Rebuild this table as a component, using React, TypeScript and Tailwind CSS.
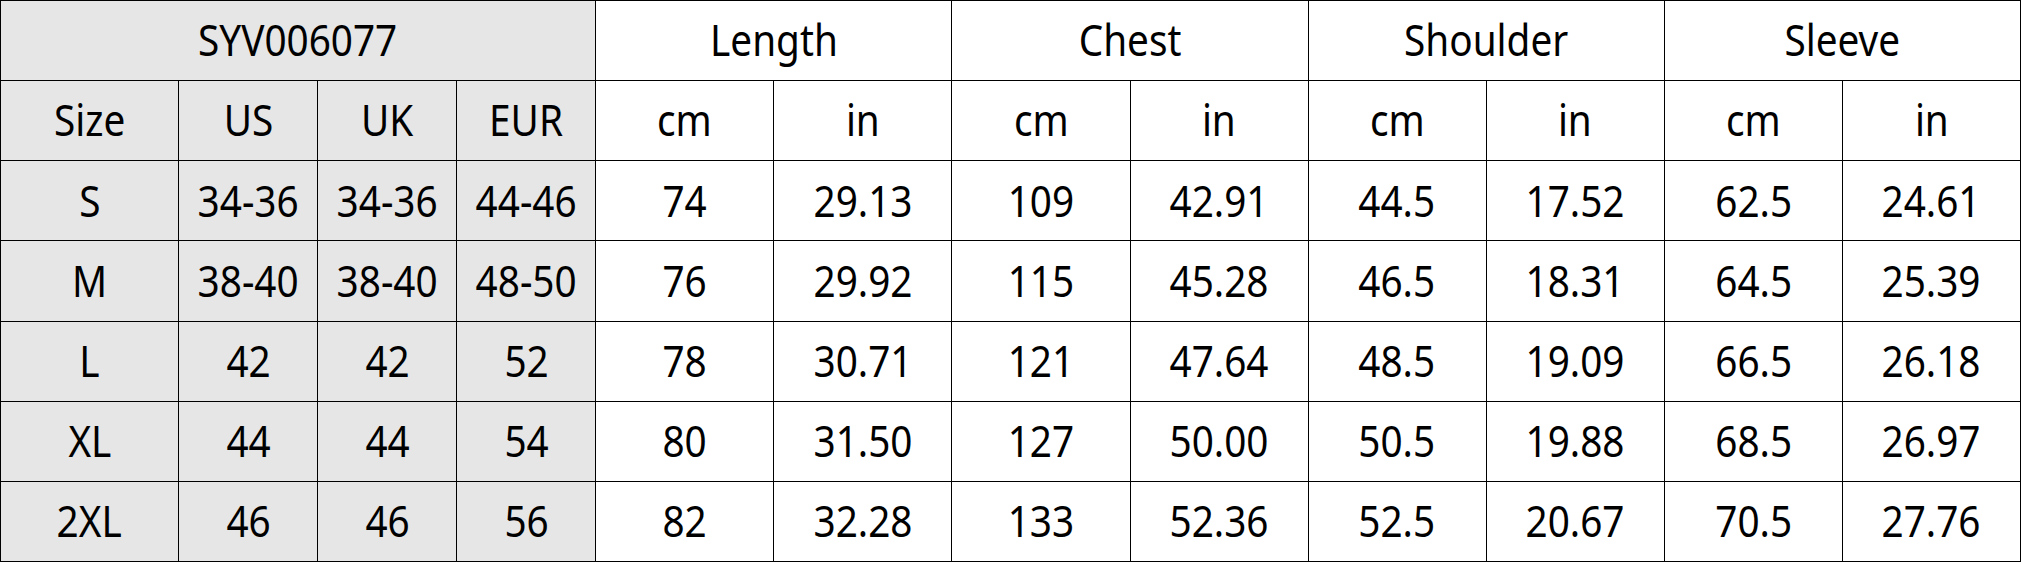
const sizes = [
  { size: "S", us: "34-36", uk: "34-36", eur: "44-46", v: ["74", "29.13", "109", "42.91", "44.5", "17.52", "62.5", "24.61"] },
  { size: "M", us: "38-40", uk: "38-40", eur: "48-50", v: ["76", "29.92", "115", "45.28", "46.5", "18.31", "64.5", "25.39"] },
  { size: "L", us: "42", uk: "42", eur: "52", v: ["78", "30.71", "121", "47.64", "48.5", "19.09", "66.5", "26.18"] },
  { size: "XL", us: "44", uk: "44", eur: "54", v: ["80", "31.50", "127", "50.00", "50.5", "19.88", "68.5", "26.97"] },
  { size: "2XL", us: "46", uk: "46", eur: "56", v: ["82", "32.28", "133", "52.36", "52.5", "20.67", "70.5", "27.76"] },
];

const measures = ["Length", "Chest", "Shoulder", "Sleeve"];

const cell = "border-[1.5px] border-black text-center align-middle p-0 whitespace-nowrap";
const gray = `${cell} bg-[#e7e6e6]`;
const white = `${cell} bg-white`;

function T({ children }: { children: React.ReactNode }) {
  return <span className="inline-block scale-x-[0.9] leading-none">{children}</span>;
}

export default function App() {
  return (
    <div className="w-[2021px] h-[562px] bg-white text-black text-[43px] font-['Noto_Sans','Open_Sans',sans-serif]">
      <table className="w-full h-full border-collapse table-fixed">
        <colgroup>
          <col className="w-[178px]" />
          <col className="w-[139px]" />
          <col className="w-[139px]" />
          <col className="w-[139px]" />
          {Array.from({ length: 8 }).map((_, i) => (
            <col key={i} className="w-[178px]" />
          ))}
        </colgroup>
        <tbody>
          <tr className="h-[80px]">
            <td colSpan={4} className={gray}><T>SYV006077</T></td>
            {measures.map((m) => (
              <td key={m} colSpan={2} className={white}><T>{m}</T></td>
            ))}
          </tr>
          <tr className="h-[80px]">
            <td className={gray}><T>Size</T></td>
            <td className={gray}><T>US</T></td>
            <td className={gray}><T>UK</T></td>
            <td className={gray}><T>EUR</T></td>
            {measures.map((m) => [
              <td key={m + "cm"} className={white}><T>cm</T></td>,
              <td key={m + "in"} className={white}><T>in</T></td>,
            ])}
          </tr>
          {sizes.map((r) => (
            <tr key={r.size} className="h-[80px]">
              <td className={gray}><T>{r.size}</T></td>
              <td className={gray}><T>{r.us}</T></td>
              <td className={gray}><T>{r.uk}</T></td>
              <td className={gray}><T>{r.eur}</T></td>
              {r.v.map((x, i) => (
                <td key={i} className={white}><T>{x}</T></td>
              ))}
            </tr>
          ))}
        </tbody>
      </table>
    </div>
  );
}
